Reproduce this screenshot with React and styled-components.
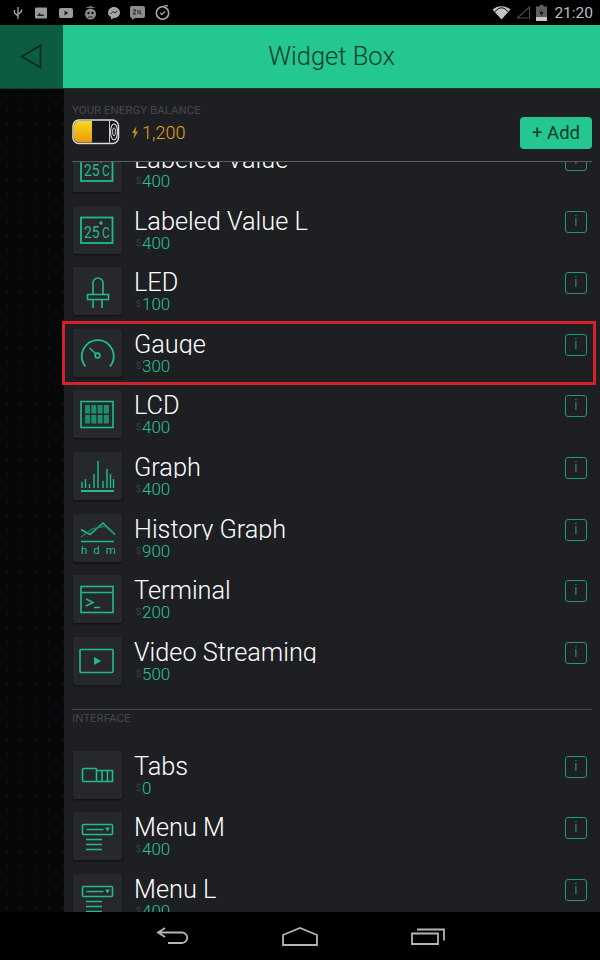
import React from 'react';
import styled, { createGlobalStyle } from 'styled-components';

const Global = createGlobalStyle`
  html, body { margin: 0; padding: 0; background: #000; }
  #root { width: 600px; height: 960px; }
  * { box-sizing: border-box; }
`;
const FONT = `Roboto, "Liberation Sans", sans-serif`;
const TEAL = '#21bb8b';

const Page = styled.div`
  width: 600px; height: 960px; display: flex; flex-direction: column;
  position: relative; overflow: hidden; background: #000; font-family: ${FONT};
`;
const StatusBar = styled.div`
  height: 25px; flex: none; background: #000; display: flex; align-items: center;
  padding: 0 7px 0 13px; color: #b9b9b9;
`;
const StatusLeft = styled.div`display: flex; align-items: center; flex: 1;`;
const StatusRight = styled.div`display: flex; align-items: center; gap: 5px;`;
const Clock = styled.span`font-size: 15.5px; margin-left: 2px; color: #bdbdbd;`;
const StatusIcon = styled.svg`margin-left: ${p => p.$gap || 0}px; display: block;`;

const Header = styled.header`
  height: 64px; flex: none; display: flex; background: #23c78f;
  border-bottom: 1px solid #123c30;
`;
const Back = styled.div`
  width: 63px; background: #0c5b43; display: flex; align-items: center; justify-content: center;
  padding-right: 2px;
`;
const Title = styled.h1`
  flex: 1; margin: 0; text-align: center; font-size: 25.5px; font-weight: 300; color: #0b3d2f;
  line-height: 62px;
`;

const Body = styled.div`flex: 1; min-height: 0; display: flex;`;
const Rail = styled.div`
  width: 64px; flex: none; background-color: #060708;
  background-image: radial-gradient(#111215 1px, transparent 1.2px);
  background-size: 14px 14px;
`;
const Panel = styled.main`
  flex: 1; min-width: 0; background: #1e1f23; display: flex; flex-direction: column;
`;
const Energy = styled.section`
  height: 73px; flex: none; margin: 0 8px; border-bottom: 1px solid #5a5c5f;
  display: grid; grid-template-columns: 1fr auto; align-items: start; padding-top: 15px;
`;
const Caption = styled.div`
  font-size: 11.5px; color: #45474c; line-height: 12px; white-space: nowrap;
`;
const Balance = styled.div`display: flex; align-items: center; margin-top: 3px; gap: 12px; height: 26px;`;
const Coins = styled.span`
  font-size: 18px; font-weight: 300; color: #e8a214; display: flex; align-items: center; gap: 4px;
`;
const AddButton = styled.button`
  width: 72px; height: 32px; margin-top: 13px; border: 0; border-radius: 4px; background: #23c78f; color: #0a3a2c;
  font-family: ${FONT}; font-size: 18.5px; font-weight: 400; padding: 0;
`;

const Scroll = styled.div`flex: 1; min-height: 0; overflow: hidden;`;
const Content = styled.div`margin-top: -18px; padding-left: 8px;`;
const Row = styled.div`
  height: 61.6px; display: flex; align-items: flex-start; padding-right: 13px; padding-left: 1px;
`;
const Tile = styled.div`
  width: 49px; height: 48px; flex: none; background: #27282c; border-radius: 2px;
  box-shadow: 0 1px 2px #0d0e10; display: flex;
`;
const Text = styled.div`flex: 1; min-width: 0; margin-left: 12px; padding-top: 2px;`;
const Name = styled.div`
  height: 24px; overflow: hidden; font-size: 25.3px; line-height: 27px; font-weight: 300; color: #fff;
  white-space: nowrap;
`;
const Price = styled.div`
  font-size: 17px; line-height: 17px; color: #25c592; font-weight: 300; display: flex; align-items: center; margin-top: 3px;
`;
const Bolt = styled.span`font-size: 9px; color: #4d5a55; margin: 0 2px; width: 4px;`;
const Info = styled.div`
  width: 22px; height: 22px; flex: none; margin-top: 5px; border: 1.5px solid #1e9a75; border-radius: 3px;
  color: #22ad84; font-size: 15px; line-height: 18px; text-align: center; font-weight: 300;
`;
const SectionHead = styled.div`
  margin: 11px 8px 0 0; height: 41.4px; border-top: 1px solid #47494c; font-size: 11.5px;
  color: #45474c; padding-top: 2px; line-height: 12px;
`;

const Highlight = styled.div`
  position: absolute; left: 62px; top: 321px; width: 534px; height: 64px; border: 3px solid #d4212c;
  pointer-events: none;
`;
const NavBar = styled.nav`
  height: 48px; flex: none; background: #000; display: grid; grid-template-columns: repeat(3, 128px);
  padding-left: 108px; align-items: center; justify-items: center;
`;

const Glyph = styled.svg.attrs({ viewBox: '0 0 49 48', width: 49, height: 48, fill: 'none' })`
  display: block; stroke: ${TEAL}; stroke-width: 1.6;
`;
const GlyphText = styled.text`
  fill: ${TEAL}; stroke: none; font-family: ${FONT}; font-size: ${p => p.$size}px; font-weight: 400;
`;

const Labeled = () => (
  <Glyph>
    <rect x="8" y="11.5" width="31.500" height="25.500" strokeWidth="1.800" />
    <GlyphText $size={17} transform="translate(11 32) scale(.82 1)">25</GlyphText>
    <GlyphText $size={15} transform="translate(29 32) scale(.8 1)">C</GlyphText>
    <circle cx="28" cy="17" r="1.700" fill={TEAL} stroke="none" />
  </Glyph>
);
const Led = () => (
  <Glyph>
    <path d="M20 27V16a5 5 0 0 1 10 0v11" />
    <path d="M14.5 27.5h21v5h-21zM20 33v8M29 33v8" />
  </Glyph>
);
const Gauge = () => (
  <Glyph>
    <path d="M12.5 37.5A16 16 0 1 1 37 37.5" strokeWidth="1.8" />
    <path d="M16.5 19l6.5 6" />
    <circle cx="24.5" cy="26.5" r="2.4" />
  </Glyph>
);
const Lcd = () => (
  <Glyph>
    <rect x="8" y="11.5" width="32" height="26" />
    {[0, 1].map(r => [0, 1, 2, 3].map(c => (
      <rect key={`${r}${c}`} x={12 + c * 6.3} y={15 + r * 10} width="5" height="8.5" fill="#1c8d6b" stroke="none" />
    )))}
  </Glyph>
);
const Graph = () => (
  <Glyph>
    <path d="M8 39h33" strokeWidth="1.8" />
    <path d="M9 36v-6M12.500 36v-9M16.500 36v-4M21 36V22M25 36V9M30 36v-7M34 36V17M37.500 36V22M40.500 36v-9" strokeWidth="1.400" />
  </Glyph>
);
const History = () => (
  <Glyph>
    <path d="M8 15.500l9 5L30 9l12 11.500" strokeWidth="1.500" />
    <path d="M8 23l11-8 13-3 10 9" strokeWidth="1.300" stroke="#1a8a68" />
    <path d="M8 27.500h33" />
    <GlyphText $size={11.500} x="8" y="40" letterSpacing="6">hdm</GlyphText>
  </Glyph>
);
const Terminal = () => (
  <Glyph>
    <rect x="8" y="11.500" width="32" height="26" />
    <path d="M8 17.500h32M13 24l7 3.500-7 3.500M21 32.500h6" />
  </Glyph>
);
const Video = () => (
  <Glyph>
    <rect x="7" y="12.500" width="33" height="23" rx="1" />
    <path d="M21 20l7 4-7 4z" fill={TEAL} stroke="none" />
  </Glyph>
);
const Tabs = () => (
  <Glyph>
    <rect x="9.500" y="17.500" width="14" height="13" rx="1" />
    <path d="M23.500 19.500h16v11h-16M29 19.500v11M34.500 19.500v11" />
  </Glyph>
);
const Menu = () => (
  <Glyph>
    <rect x="9.500" y="12.500" width="30" height="10" rx="1" />
    <path d="M13.500 17.500h17M13 27.500h16M13 32.500h16M13 37.500h16" />
    <path d="M32 15.500h5l-2.500 4z" fill={TEAL} stroke="none" />
  </Glyph>
);

const rows1 = [
  ['Labeled Value', '400', Labeled],
  ['Labeled Value L', '400', Labeled],
  ['LED', '100', Led],
  ['Gauge', '300', Gauge],
  ['LCD', '400', Lcd],
  ['Graph', '400', Graph],
  ['History Graph', '900', History],
  ['Terminal', '200', Terminal],
  ['Video Streaming', '500', Video],
];
const rows2 = [
  ['Tabs', '0', Tabs],
  ['Menu M', '400', Menu],
  ['Menu L', '400', Menu],
];

const Widget = ({ name, price, Icon }) => (
  <Row>
    <Tile><Icon /></Tile>
    <Text>
      <Name>{name}</Name>
      <Price><Bolt>$</Bolt>{price}</Price>
    </Text>
    <Info>i</Info>
  </Row>
);

const StatusIcons = () => (
  <>
    <StatusIcon width="10" height="14" viewBox="0 0 10 14" fill="none" stroke="#aaa" strokeWidth="1.300"><path d="M5 1v12M1.500 4v3l3.500 3M8.500 3.500v2L5 8.500" /></StatusIcon>
    <StatusIcon $gap={12} width="12" height="12" viewBox="0 0 12 12"><rect width="12" height="11" y="0.500" rx="1" fill="#9a9a9a" /><path d="M2 9l2.500-3 2 2 1-1 2 2z" fill="#222" /></StatusIcon>
    <StatusIcon $gap={12} width="14" height="10" viewBox="0 0 14 10"><rect width="14" height="10" rx="2" fill="#9c9c9c" /><path d="M5.500 2.500l4 2.500-4 2.500z" fill="#222" /></StatusIcon>
    <StatusIcon $gap={11} width="13" height="16" viewBox="0 0 13 16"><path d="M1 3h11L6.500 1z" fill="#777" /><circle cx="6.500" cy="9" r="5.500" fill="#8b8b8b" /><circle cx="4.500" cy="8" r="1.200" fill="#111" /><circle cx="8.500" cy="8" r="1.200" fill="#111" /><path d="M4 12h5" stroke="#222" /></StatusIcon>
    <StatusIcon $gap={10} width="14" height="14" viewBox="0 0 14 14"><path d="M7 1c3.500 0 6 2.500 6 5.500S10.500 12 7 12l-3 1.500V11C2 10 1 8.500 1 6.500 1 3.500 3.500 1 7 1z" fill="#a5a5a5" /><path d="M3.500 8L6 5.500l2 1.500 2.500-2" stroke="#222" fill="none" /></StatusIcon>
    <StatusIcon $gap={9} width="15" height="14" viewBox="0 0 15 14"><path d="M2 0h11a2 2 0 0 1 2 2v8a2 2 0 0 1-2 2H5l-3 2v-2a2 2 0 0 1-2-2V2a2 2 0 0 1 2-2z" fill="#8d8d8d" /><path d="M3 4h3L3 8h3M8 4v4M10 4v4h1.500" stroke="#222" fill="none" /></StatusIcon>
    <StatusIcon $gap={10} width="15" height="15" viewBox="0 0 15 15" fill="none" stroke="#a8a8a8"><circle cx="7.500" cy="8" r="6.200" strokeWidth="1.600" /><path d="M5 8l2 1.500 3-3" strokeWidth="1.200" /><path d="M9 .8h4" strokeWidth="1.300" /></StatusIcon>
  </>
);

export default function App() {
  return (
    <Page>
      <Global />
      <StatusBar>
        <StatusLeft><StatusIcons /></StatusLeft>
        <StatusRight>
          <svg width="19" height="14" viewBox="0 0 19 14"><path d="M.500 3.500C5.500-1 13.500-1 18.500 3.500L9.500 13.500z" fill="#c4c4c4" /><path d="M3 4.800C7-.5 12-.5 16 4.800" stroke="#000" fill="none" strokeWidth="1" transform="translate(0 1)" /></svg>
          <svg width="15" height="13" viewBox="0 0 15 13" fill="none" stroke="#4a4a4a" strokeWidth="1.200"><path d="M13.500 1v11H1.500z" /></svg>
          <svg width="11" height="16" viewBox="0 0 11 16"><path d="M3.500 0h4v1.500H11V16H0V1.500h3.500z" fill="#5f5f5f" /><path d="M0 12h11v4H0z" fill="#c8c8c8" /><path d="M6 4L3.500 9H5.500L5 12l2.500-5H5.500z" fill="#111" /></svg>
          <Clock>21:20</Clock>
        </StatusRight>
      </StatusBar>
      <Header>
        <Back>
          <svg width="22" height="25" viewBox="0 0 22 25" fill="none" stroke="#062a20" strokeWidth="1.600"><path d="M20.500 1.500v22L1.500 12.500z" /></svg>
        </Back>
        <Title>Widget Box</Title>
      </Header>
      <Body>
        <Rail />
        <Panel>
          <Energy>
            <div>
              <Caption>YOUR ENERGY BALANCE</Caption>
              <Balance>
                <svg width="48" height="26" viewBox="0 0 48 26">
                  <defs>
                    <linearGradient id="charge" x1="0" y1="0" x2="0" y2="1">
                      <stop offset="0" stopColor="#f9d81c" />
                      <stop offset="1" stopColor="#e89a0a" />
                    </linearGradient>
                  </defs>
                  <rect x="1" y="1" width="45.500" height="23.500" rx="6" fill="#17181b" stroke="#dcdcdc" strokeWidth="1.500" />
                  <path d="M7 2h13v21.500H7a5 5 0 0 1-5-5V7a5 5 0 0 1 5-5z" fill="url(#charge)" />
                  <path d="M37.500 1.500v22" stroke="#cfcfcf" />
                  <ellipse cx="42" cy="12.800" rx="3.500" ry="8" fill="none" stroke="#cfcfcf" strokeWidth="1.200" />
                  <ellipse cx="42" cy="12.800" rx="1.500" ry="4" fill="none" stroke="#cfcfcf" />
                </svg>
                <Coins>
                  <svg width="6" height="13" viewBox="0 0 6 13"><path d="M4.500 0L0 7h2.500L1.500 13 6 5.500H3.500z" fill="#c98a10" /></svg>
                  1,200
                </Coins>
              </Balance>
            </div>
            <AddButton>+ Add</AddButton>
          </Energy>
          <Scroll>
            <Content>
              {rows1.map(([n, p, I]) => <Widget key={n} name={n} price={p} Icon={I} />)}
              <SectionHead>INTERFACE</SectionHead>
              {rows2.map(([n, p, I]) => <Widget key={n} name={n} price={p} Icon={I} />)}
            </Content>
          </Scroll>
        </Panel>
      </Body>
      <NavBar>
        <svg width="33" height="18" viewBox="0 0 33 18" fill="none" stroke="#b5b5b5" strokeWidth="1.800"><path d="M9 1L2 5.500 9 10M2 5.500h24a5 5 0 0 1 0 10.500H12" /></svg>
        <svg width="36" height="19" viewBox="0 0 36 19" fill="none" stroke="#b5b5b5" strokeWidth="1.800"><path d="M1 18V8L18 1l17 7v10z" /></svg>
        <svg width="34" height="18" viewBox="0 0 34 18" fill="none" stroke="#b5b5b5" strokeWidth="1.800"><path d="M1 6.500h26V17H1zM6 2.500h27v11" /></svg>
      </NavBar>
      <Highlight />
    </Page>
  );
}
